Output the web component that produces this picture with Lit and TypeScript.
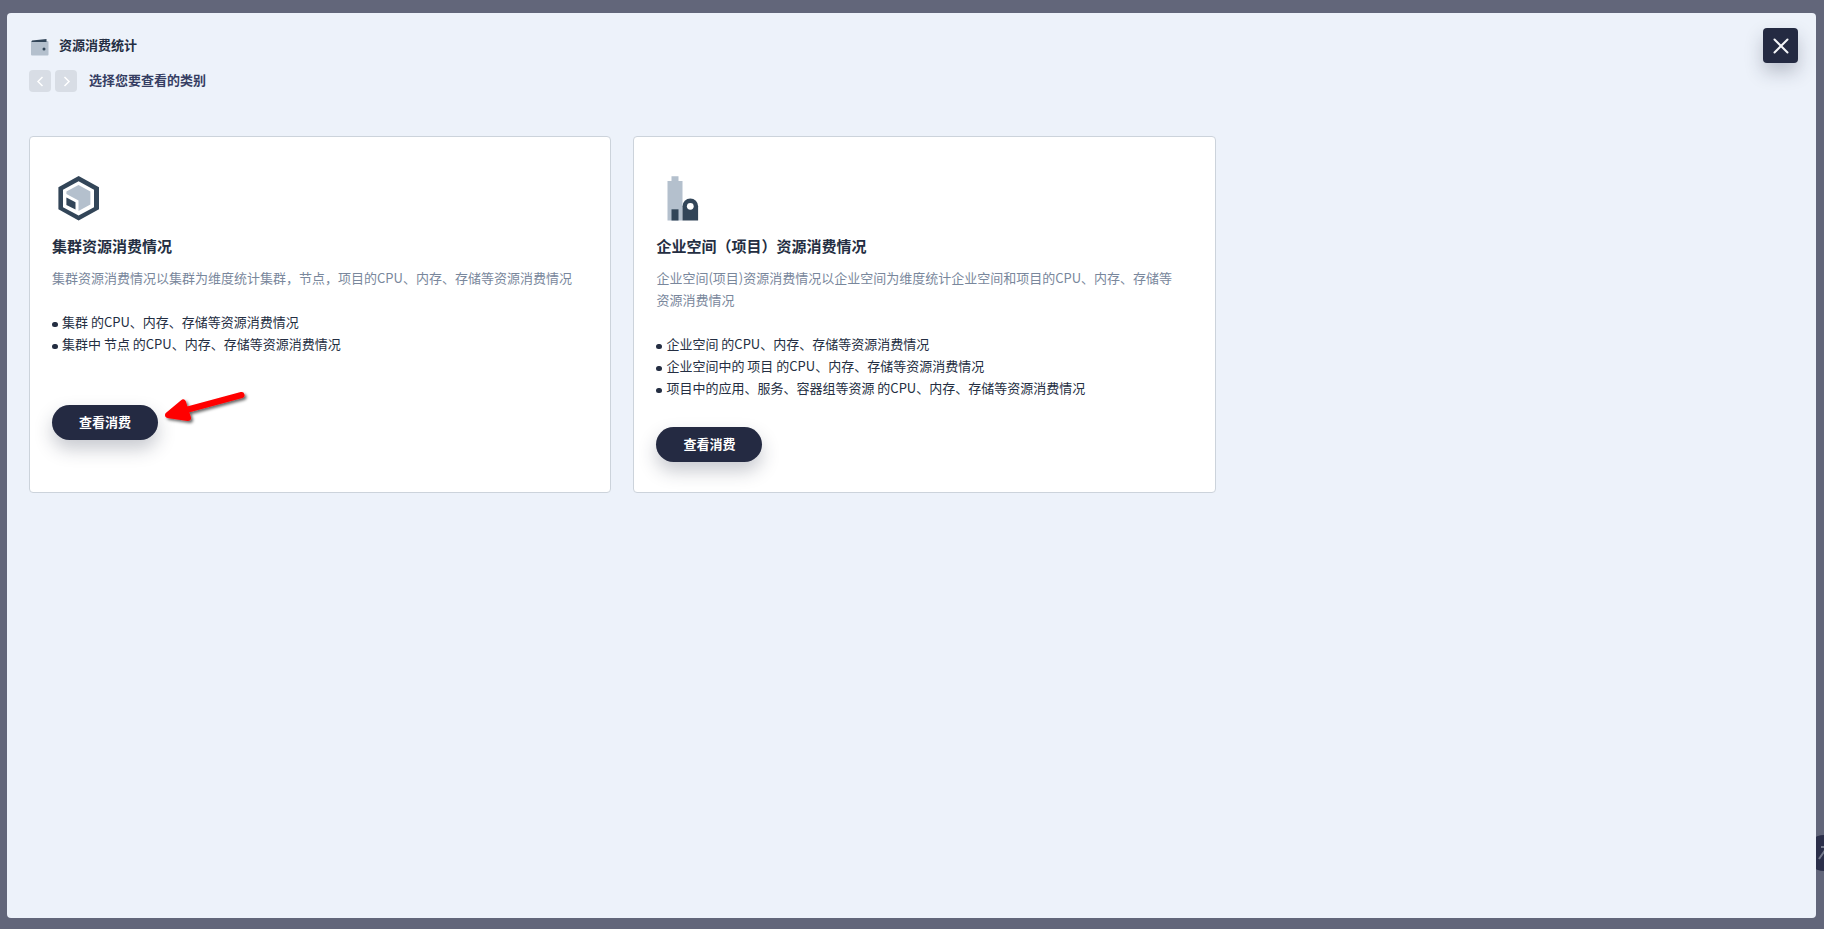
import { LitElement, html, css, svg } from "lit";
import { customElement, property } from "lit/decorators.js";

const clusterIcon = svg`
  <path d="M26.600 4 47 15.200v22L26.600 48.400 6.400 37.200v-22z" fill="#324558"/>
  <path d="M26.600 9.300 42 17.700v17.500L26.600 43.400 11 35.200V17.700z" fill="#fff"/>
  <path d="M26.500 13 38.400 19.500v13L26.500 39V28.500L14.400 22V19.500z" fill="#b4c0cd"/>
  <path d="M14.400 25.500 23.500 30.200v7.300L14.400 33z" fill="#324558"/>`;

const workspaceIcon = svg`
  <path d="M11.500 9H15.500V4.300H22.500V9H26.500V48.500H11.500z" fill="#b4c0cd"/>
  <path d="M15.500 37.300h7v11.200h-7z" fill="#324558"/>
  <path d="M26.500 48.500V34.200a7.800 7.800 0 0 1 15.600 0v14.300z" fill="#324558"/>
  <circle cx="34.300" cy="34.300" r="3.400" fill="#fff"/>`;

interface Category {
  icon: unknown;
  title: string;
  description: string;
  items: string[];
}

const categories: Category[] = [
  {
    icon: clusterIcon,
    title: "集群资源消费情况",
    description: "集群资源消费情况以集群为维度统计集群，节点，项目的CPU、内存、存储等资源消费情况",
    items: ["集群 的CPU、内存、存储等资源消费情况", "集群中 节点 的CPU、内存、存储等资源消费情况"],
  },
  {
    icon: workspaceIcon,
    title: "企业空间（项目）资源消费情况",
    description: "企业空间(项目)资源消费情况以企业空间为维度统计企业空间和项目的CPU、内存、存储等资源消费情况",
    items: [
      "企业空间 的CPU、内存、存储等资源消费情况",
      "企业空间中的 项目 的CPU、内存、存储等资源消费情况",
      "项目中的应用、服务、容器组等资源 的CPU、内存、存储等资源消费情况",
    ],
  },
];

@customElement("category-card")
export class CategoryCard extends LitElement {
  @property({ attribute: false }) category!: Category;

  static styles = css`
    :host {
      display: block;
      box-sizing: border-box;
      padding: 35px 22px 30px;
      background: #fff;
      border: 1px solid #ccd3db;
      border-radius: 4px;
    }
    .icon {
      display: block;
      width: 53px;
      height: 53px;
    }
    .title {
      margin: 10px 0;
      font-size: 15px;
      font-weight: 700;
      line-height: 22px;
      color: #242e42;
    }
    .description {
      margin: 0 0 22px;
      padding-right: 10px;
      color: #79879c;
    }
    .items {
      min-height: 66px;
      margin: 0 0 28px;
      padding: 0;
      list-style: none;
    }
    .item {
      display: flex;
      align-items: center;
      gap: 4px;
    }
    .item::before {
      content: "";
      flex: none;
      width: 6px;
      height: 5px;
      margin-top: 4px;
      border-radius: 3px;
      background: #242e42;
    }
    .view {
      display: block;
      height: 35px;
      padding: 0 27px 1px;
      border: 0;
      border-radius: 18px;
      background: #242a42;
      box-shadow: 0 9px 18px rgba(36, 42, 66, 0.25);
      color: #fff;
      font: inherit;
      font-weight: 700;
      cursor: pointer;
    }
  `;

  render() {
    const { icon, title, description, items } = this.category;
    return html`
      <svg class="icon" viewBox="0 0 53 53" aria-hidden="true">${icon}</svg>
      <h2 class="title">${title}</h2>
      <p class="description">${description}</p>
      <ul class="items">
        ${items.map((item) => html`<li class="item">${item}</li>`)}
      </ul>
      <button class="view" type="button">查看消费</button>
    `;
  }
}

@customElement("app-root")
export class AppRoot extends LitElement {
  static styles = css`
    :host {
      display: flex;
      box-sizing: border-box;
      min-height: 100vh;
      position: relative;
      overflow: hidden;
      padding: 13px 8px 11px 7px;
      background: #62667a;
      color: #242e42;
      font: 13px/22px "Noto Sans CJK SC", sans-serif;
    }
    .panel {
      flex: 1;
      position: relative;
      padding: 21px 22px;
      background: #edf2fa;
      border-radius: 4px;
    }
    .header {
      display: flex;
      justify-content: space-between;
      align-items: flex-start;
      margin-bottom: 44px;
    }
    .heading {
      display: flex;
      align-items: center;
      gap: 8px;
      margin-bottom: 14px;
    }
    .heading-icon {
      width: 22px;
      height: 22px;
    }
    .heading-text {
      margin: 0;
      font-size: 13px;
      font-weight: 700;
    }
    .steps {
      display: flex;
      align-items: center;
      gap: 4px;
    }
    .step {
      width: 22px;
      height: 22px;
      padding: 0;
      border: 0;
      border-radius: 4px;
      background: #d8dde5;
    }
    .step-icon,
    .close-icon {
      display: block;
      margin: auto;
    }
    .step-text {
      margin: 0 0 0 8px;
      font-weight: 700;
      line-height: 20px;
      padding-bottom: 2px;
      color: #363e63;
    }
    .close {
      width: 35px;
      height: 35px;
      margin: -6px -4px 0 0;
      padding: 0;
      border: 0;
      border-radius: 4px;
      background: #242a42;
      box-shadow: 0 9px 18px rgba(36, 42, 66, 0.25);
      cursor: pointer;
    }
    .cards {
      display: grid;
      grid-template-columns: repeat(2, 33%);
      gap: 22px;
    }
    .pointer {
      position: absolute;
      left: 154px;
      top: 374px;
    }
    .tool {
      position: absolute;
      left: calc(100% - 18px);
      bottom: 58px;
      width: 36px;
      height: 36px;
      padding: 0;
      border: 0;
      border-radius: 50%;
      background: #2b2f4a;
    }
  `;

  render() {
    return html`
      <button class="tool" type="button" aria-label="工具箱">
        <svg width="36" height="36" viewBox="0 0 36 36" fill="none" stroke="#757a8c" stroke-width="2">
          <path d="M13 24 20 14M15 12h7v7"/>
        </svg>
      </button>
      <main class="panel">
        <header class="header">
          <div>
            <div class="heading">
              <svg class="heading-icon" viewBox="0 0 22 22" aria-hidden="true">
                <path d="M2.500 7h16a1 1 0 0 1 1 1v12.500a1 1 0 0 1-1 1h-15.500a1 1 0 0 1-1-1V7z" fill="#b4c0cd"/>
                <path d="M2.500 7.500 3 6.500 17.500 5v3H3z" fill="#324558"/>
                <circle cx="15" cy="15" r="1.500" fill="#324558"/>
              </svg>
              <h1 class="heading-text">资源消费统计</h1>
            </div>
            <div class="steps">
              <button class="step" type="button" aria-label="上一步" disabled>
                <svg class="step-icon" width="22" height="22" viewBox="0 0 22 22" fill="none" stroke="#fff" stroke-width="1.500"><path d="M13.500 7 9 11.500l4.500 4.500"/></svg>
              </button>
              <button class="step" type="button" aria-label="下一步" disabled>
                <svg class="step-icon" width="22" height="22" viewBox="0 0 22 22" fill="none" stroke="#fff" stroke-width="1.500"><path d="M9.500 7l4.500 4.500-4.500 4.500"/></svg>
              </button>
              <p class="step-text">选择您要查看的类别</p>
            </div>
          </div>
          <button class="close" type="button" aria-label="关闭">
            <svg class="close-icon" width="35" height="35" viewBox="0 0 35 35" stroke="#f4f5f8" stroke-width="2" stroke-linecap="round"><path d="M11.500 11.500l13 13M24.500 11.500l-13 13"/></svg>
          </button>
        </header>
        <section class="cards">
          ${categories.map((category) => html`<category-card .category=${category}></category-card>`)}
        </section>
        <svg class="pointer" width="96" height="54" viewBox="0 0 96 54" aria-hidden="true">
          <defs>
            <filter id="shade" x="-20%" y="-20%" width="150%" height="160%">
              <feDropShadow dx="2" dy="2" stdDeviation="1.500" flood-color="#000" flood-opacity="0.6"/>
            </filter>
          </defs>
          <g filter="url(#shade)" fill="#f00" stroke="#f00" stroke-linecap="round" stroke-linejoin="round">
            <path d="M80.500 8 25 23" stroke-width="6" fill="none"/>
            <path d="M7 28 22 15.500 27 31z" stroke-width="6"/>
          </g>
        </svg>
      </main>
    `;
  }
}
